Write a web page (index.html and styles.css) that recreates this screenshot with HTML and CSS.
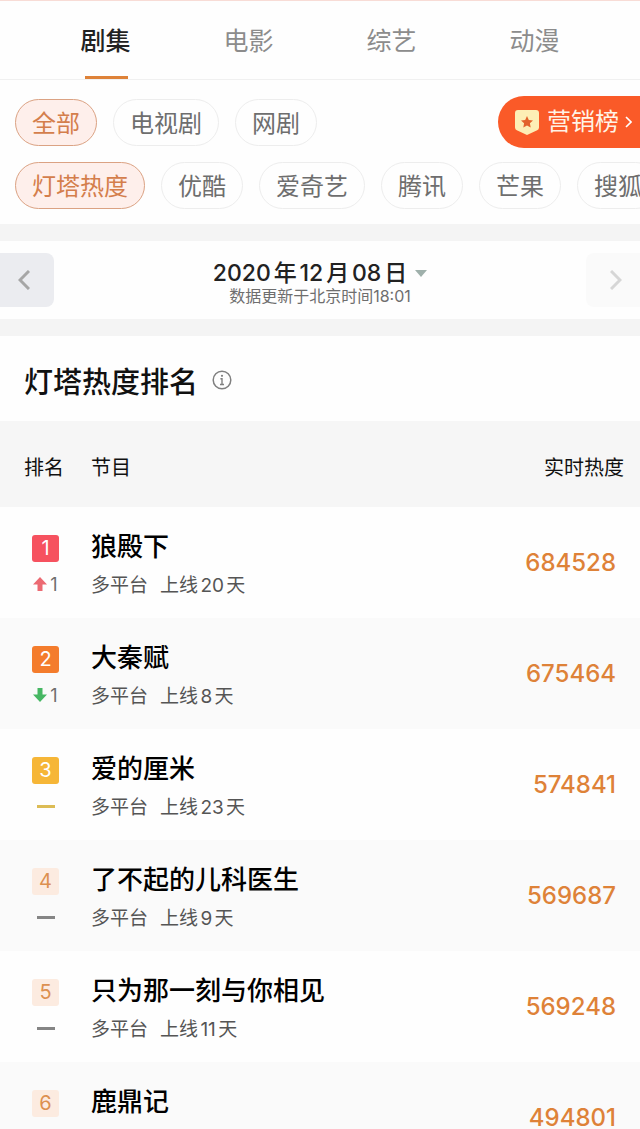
FILE: index.html
```html
<!DOCTYPE html>
<html lang="zh-CN">

<head>
	<meta charset="UTF-8">
	<meta name="viewport" content="width=device-width, initial-scale=1.0">
	<title>灯塔热度排名</title>
	<link rel="stylesheet" href="styles.css">
</head>

<body>
	<nav class="tabs">
		<a href="#" class="tab active">剧集</a>
		<a href="#" class="tab">电影</a>
		<a href="#" class="tab">综艺</a>
		<a href="#" class="tab">动漫</a>
	</nav>

	<div class="filters">
		<div class="filter-row top-row">
			<button class="chip selected">全部</button>
			<button class="chip">电视剧</button>
			<button class="chip">网剧</button>
			<a href="#" class="promo">
				<svg class="shield" viewBox="0 0 24 25">
					<path fill="#fdeeb5" d="M3 0h18a3 3 0 0 1 3 3v14.500a3 3 0 0 1-1.800 2.700L12 25 1.800 20.200A3 3 0 0 1 0 17.500V3a3 3 0 0 1 3-3z" />
					<path fill="#e2622b" d="M12 6l1.800 3.900 4.200.5-3.100 2.900.8 4.200L12 15.400l-3.700 2.100.8-4.200L6 10.400l4.200-.5z" />
				</svg>
				<span>营销榜</span>
				<svg class="promo-arrow" viewBox="0 0 7 12">
					<path fill="none" stroke="#fff" stroke-width="1.600" d="M1 1l5 5-5 5" />
				</svg>
			</a>
		</div>
		<div class="filter-row">
			<button class="chip selected">灯塔热度</button>
			<button class="chip">优酷</button>
			<button class="chip">爱奇艺</button>
			<button class="chip">腾讯</button>
			<button class="chip">芒果</button>
			<button class="chip">搜狐</button>
		</div>
	</div>

	<div class="date-bar">
		<button class="day-nav prev" aria-label="前一天">
			<svg viewBox="0 0 12 20">
				<path d="M11 1L2 10l9 9" />
			</svg>
		</button>
		<div class="date-info">
			<button class="date"><span>2020年12月08日</span><span class="caret"></span></button>
			<div class="updated">数据更新于北京时间18:01</div>
		</div>
		<button class="day-nav next" aria-label="后一天">
			<svg viewBox="0 0 12 20">
				<path d="M1 1l9 9-9 9" />
			</svg>
		</button>
	</div>

	<div class="ranking">
		<div class="heading">
			<h1>灯塔热度排名</h1>
			<svg class="info" viewBox="0 0 20 20">
				<circle cx="10" cy="10" r="8.800" fill="none" stroke="#808080" stroke-width="1.500" />
				<circle cx="10" cy="5.800" r="1.100" fill="#808080" />
				<path fill="none" stroke="#808080" stroke-width="1.400" d="M8.400 8.700H10v5.600M8 14.500h4" />
			</svg>
		</div>
		<table>
			<thead>
				<tr>
					<th class="col-rank">排名</th>
					<th class="col-show">节目</th>
					<th class="col-heat">实时热度</th>
				</tr>
			</thead>
			<tbody>
				<tr>
					<td class="col-rank">
						<div class="badge first">1</div>
						<div class="change">
							<svg class="arrow up" viewBox="0 0 14 14">
								<path d="M7 0l7 7.500H9.500V14h-5V7.500H0z" />
							</svg>1
						</div>
					</td>
					<td class="col-show">
						<div class="name">狼殿下</div>
						<div class="meta"><span>多平台</span><span>上线20天</span></div>
					</td>
					<td class="col-heat">684528</td>
				</tr>
				<tr>
					<td class="col-rank">
						<div class="badge second">2</div>
						<div class="change">
							<svg class="arrow down" viewBox="0 0 14 14">
								<path d="M7 14l7-7.500H9.500V0h-5v6.500H0z" />
							</svg>1
						</div>
					</td>
					<td class="col-show">
						<div class="name">大秦赋</div>
						<div class="meta"><span>多平台</span><span>上线8天</span></div>
					</td>
					<td class="col-heat">675464</td>
				</tr>
				<tr>
					<td class="col-rank">
						<div class="badge third">3</div>
						<div class="change"><span class="same gold"></span></div>
					</td>
					<td class="col-show">
						<div class="name">爱的厘米</div>
						<div class="meta"><span>多平台</span><span>上线23天</span></div>
					</td>
					<td class="col-heat">574841</td>
				</tr>
				<tr>
					<td class="col-rank">
						<div class="badge">4</div>
						<div class="change"><span class="same"></span></div>
					</td>
					<td class="col-show">
						<div class="name">了不起的儿科医生</div>
						<div class="meta"><span>多平台</span><span>上线9天</span></div>
					</td>
					<td class="col-heat">569687</td>
				</tr>
				<tr>
					<td class="col-rank">
						<div class="badge">5</div>
						<div class="change"><span class="same"></span></div>
					</td>
					<td class="col-show">
						<div class="name">只为那一刻与你相见</div>
						<div class="meta"><span>多平台</span><span>上线11天</span></div>
					</td>
					<td class="col-heat">569248</td>
				</tr>
				<tr>
					<td class="col-rank">
						<div class="badge">6</div>
					</td>
					<td class="col-show">
						<div class="name">鹿鼎记</div>
					</td>
					<td class="col-heat">494801</td>
				</tr>
			</tbody>
		</table>
	</div>
</body>

</html>
```
FILE: styles.css
```css
:root {
	--orange: #de8238;
	--promo: #fa5a28;
	--strip: #f4f4f4;
	--gray: #6e6e6e;
}

* {
	box-sizing: border-box;
}

body {
	margin: 0;
	height: 100vh;
	overflow: hidden;
	font-family: Inter, 'Noto Sans CJK SC', sans-serif;
	background: #fefefe;
	color: #111;
}

a {
	text-decoration: none;
	color: inherit;
}

button {
	margin: 0;
	padding: 0;
	border: 0;
	background: none;
	font: inherit;
	color: inherit;
	cursor: pointer;
}

/* Tabs */
.tabs {
	display: flex;
	height: 80px;
	padding: 0 34px;
	border-top: 1px solid #f8dcd6;
	border-bottom: 1px solid #f0f0f0;
}

.tab {
	position: relative;
	flex: 1;
	text-align: center;
	font-size: 25px;
	line-height: 80px;
	color: #8c8c8c;
}

.tab.active {
	font-weight: 500;
	color: #222;
}

.tab.active::after {
	content: "";
	position: absolute;
	left: 50%;
	bottom: 0;
	width: 43px;
	height: 3px;
	margin-left: -21px;
	background: var(--orange);
}

/* Filters */
.filters {
	padding: 16px 0 15px 15px;
	overflow: hidden;
}

.filter-row {
	display: flex;
	align-items: center;
	gap: 16px;
}

.top-row {
	margin-bottom: 14px;
}

.chip {
	flex: none;
	height: 47px;
	padding: 3px 16px 0;
	border: 1px solid #ededed;
	border-radius: 24px;
	font-size: 24px;
	line-height: 42px;
	color: var(--gray);
}

.chip.selected {
	border-color: #dba283;
	background: #feefeb;
	color: #d47e4c;
}

.promo {
	display: flex;
	align-items: center;
	height: 52px;
	margin-left: auto;
	padding: 0 8px 0 17px;
	border-radius: 26px 0 0 26px;
	background: var(--promo);
	font-size: 24px;
	line-height: 48px;
	color: #fff3e6;
}

.shield {
	width: 24px;
	height: 25px;
	margin-right: 8px;
}

.promo-arrow {
	width: 7px;
	height: 12px;
	margin-left: 6px;
}

/* Date picker */
.date-bar {
	display: flex;
	justify-content: space-between;
	align-items: center;
	height: 112px;
	border: solid var(--strip);
	border-width: 17px 0;
}

.day-nav {
	display: flex;
	align-items: center;
	width: 54px;
	height: 54px;
}

.day-nav svg {
	width: 12px;
	height: 20px;
	fill: none;
	stroke-width: 3;
}

.prev {
	padding-left: 18px;
	border-radius: 0 8px 8px 0;
	background: #ebecf0;
	stroke: #a6a6a6;
}

.next {
	padding-left: 24px;
	border-radius: 8px 0 0 8px;
	background: #fafafa;
	stroke: #d6d6d6;
}

.date-info {
	padding-top: 6px;
	text-align: center;
}

.date {
	display: inline-flex;
	align-items: center;
	font-size: 23px;
	font-weight: 500;
	line-height: 26px;
	color: #222;
	text-autospace: normal;
}

.caret {
	margin-left: 8px;
	border: solid transparent;
	border-width: 7px 6px 0;
	border-top-color: #9fb0ab;
}

.updated {
	font-size: 16px;
	line-height: 20px;
	color: var(--gray);
}

/* Ranking */
.heading {
	display: flex;
	align-items: center;
	height: 85px;
	padding: 2px 24px 0;
}

h1 {
	margin: 0 14px 0 0;
	font-size: 29px;
	font-weight: 500;
}

.info {
	width: 20px;
	height: 20px;
}

table {
	width: 100%;
	border-collapse: collapse;
}

th {
	height: 86px;
	padding: 4px 0 0;
	background: #f6f6f6;
	font-size: 20px;
	font-weight: 400;
	text-align: left;
}

td {
	height: 111px;
	padding: 0;
	vertical-align: top;
}

tbody tr:nth-child(even) {
	background: #fafafa;
}

.col-rank {
	width: 91px;
	padding-left: 24px;
}

td.col-rank {
	padding: 28px 32px 0;
}

th.col-heat {
	padding-right: 16px;
	text-align: right;
}

td.col-heat {
	padding-right: 24px;
	vertical-align: middle;
	text-align: right;
	font-size: 24px;
	font-weight: 500;
	color: var(--orange);
}

.badge {
	width: 27px;
	height: 27px;
	border-radius: 3px;
	background: #fcebe0;
	font-size: 20px;
	line-height: 27px;
	text-align: center;
	color: #dc9050;
}

.first {
	background: #f6525f;
	color: #fff;
}

.second {
	background: #f47c2c;
	color: #fff;
}

.third {
	background: #f6b637;
	color: #fff;
}

.change {
	display: flex;
	align-items: center;
	justify-content: center;
	gap: 3px;
	height: 28px;
	margin-top: 8px;
	font-size: 18px;
	color: var(--gray);
}

.arrow {
	flex: none;
	width: 14px;
	height: 14px;
}

.up {
	fill: #ec6a72;
}

.down {
	fill: #46b763;
}

.same {
	width: 18px;
	height: 3px;
	background: #858585;
}

.gold {
	background: #dcbc55;
}

.name {
	margin-top: 22px;
	font-size: 26px;
	font-weight: 500;
	line-height: 36px;
	color: #000;
}

.meta {
	display: flex;
	gap: 12px;
	margin-top: 7px;
	font-size: 19px;
	line-height: 28px;
	color: #555;
	text-autospace: normal;
}
```
